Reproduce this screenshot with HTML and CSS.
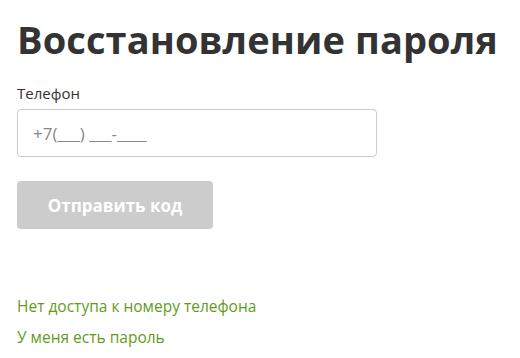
FILE: index.html
```html
<!DOCTYPE html>
<html lang="ru">
<head>
<meta charset="utf-8">
<link rel="stylesheet" href="styles.css">
</head>
<body>
<main class="page">
  <h1 class="title">Восстановление пароля</h1>
  <form class="form">
    <label class="label" for="phone">Телефон</label>
    <input class="input" id="phone" type="text" placeholder="+7(___) ___-____">
    <button class="btn" type="button">Отправить код</button>
  </form>
  <nav class="links">
    <a class="link" href="#">Нет доступа к номеру телефона</a>
    <a class="link" href="#">У меня есть пароль</a>
  </nav>
</main>
</body>
</html>
```

FILE: styles.css
```css
html, body {
  margin: 0;
  padding: 0;
  background: #fff;
}
body {
  font-family: "Open Sans", "Liberation Sans", sans-serif;
  color: #333;
}
.page {
  padding: 16px 17px 0;
}
.title {
  margin: 0;
  font-family: "Open Sans", sans-serif;
  font-weight: 700;
  font-size: 38px;
  line-height: 46px;
  color: #333;
  white-space: nowrap;
  letter-spacing: 0.1px;
}
.form {
  display: flex;
  flex-direction: column;
  align-items: flex-start;
  margin-top: 21px;
}
.label {
  font-size: 15px;
  line-height: 20px;
  color: #333;
}
.input {
  margin-top: 6px;
  box-sizing: border-box;
  width: 360px;
  height: 48px;
  border: 1px solid #ccc;
  border-radius: 4px;
  padding: 0 15px;
  font-family: "Open Sans", sans-serif;
  font-size: 17px;
  color: #555;
}
.input::placeholder {
  color: #888;
}
.btn {
  margin-top: 24px;
  box-sizing: border-box;
  width: 196px;
  height: 48px;
  border: 0;
  border-radius: 4px;
  background: #ccc;
  color: #fff;
  font-family: "Open Sans", sans-serif;
  font-weight: 700;
  font-size: 17px;
}
.links {
  display: flex;
  flex-direction: column;
  align-items: flex-start;
  gap: 9px;
  margin-top: 66px;
}
.link {
  font-size: 15.5px;
  line-height: 22px;
  color: #5f9c1e;
  text-decoration: none;
}
```
